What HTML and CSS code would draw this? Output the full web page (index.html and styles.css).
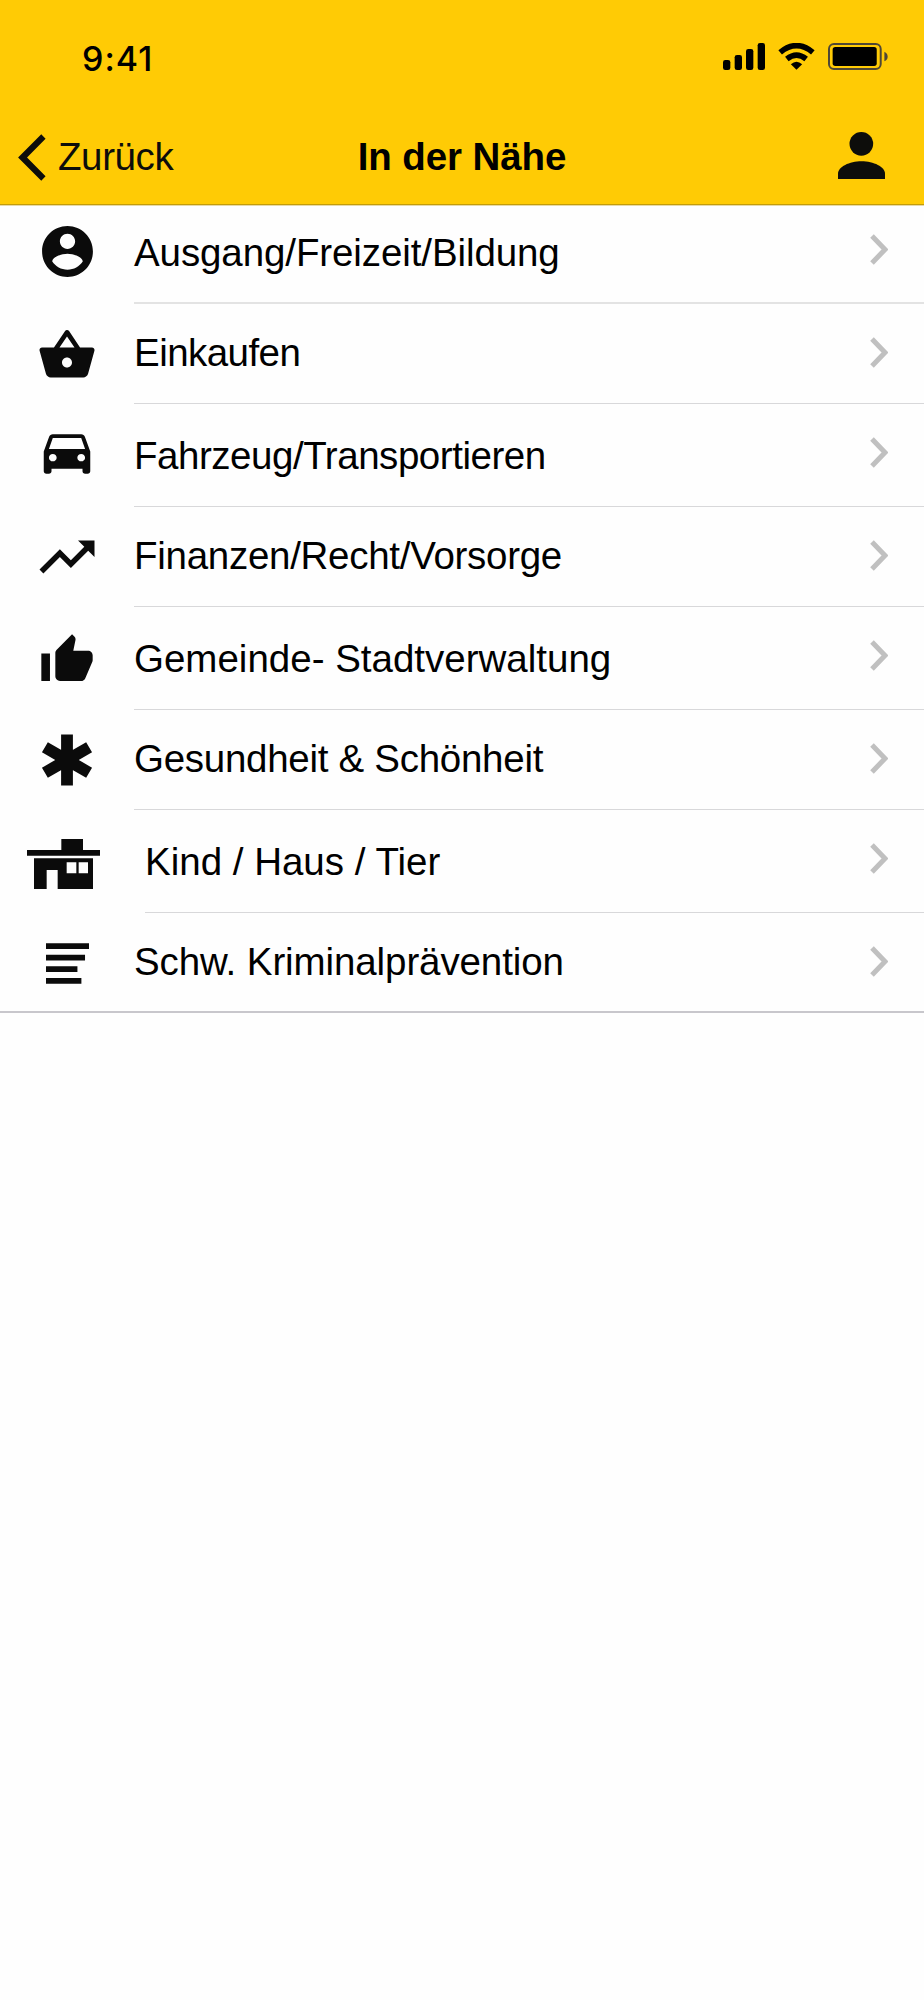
FILE: index.html
```html
<!DOCTYPE html>
<html lang="de">
<head>
    <meta charset="UTF-8">
    <meta name="viewport" content="width=device-width, initial-scale=1.0">
    <title>In der Nähe</title>
    <link rel="stylesheet" href="styles.css">
</head>
<body>
    <header class="header">
        <div class="status-bar">
            <span class="time">9:41</span>
            <div class="status-icons">
                <svg class="signal" viewBox="0 0 126 81">
                    <rect x="0" y="51" width="22" height="30" rx="7"/>
                    <rect x="35" y="36" width="22" height="45" rx="7"/>
                    <rect x="69" y="18" width="22" height="63" rx="7"/>
                    <rect x="104" y="0" width="22" height="81" rx="7"/>
                </svg>
                <svg class="wifi" viewBox="0 0 110 81">
                    <path d="M6 28Q55-12 104 28M26 48Q55 25 84 48" fill="none" stroke="#000" stroke-width="17"/>
                    <path d="M55 80L38 64Q55 49 72 64z"/>
                </svg>
                <svg class="battery" viewBox="0 0 181 81">
                    <rect x="3" y="3" width="156" height="75" rx="15" fill="none" stroke="#4f4736" stroke-width="6"/>
                    <rect x="14" y="12" width="133" height="57" rx="8"/>
                    <path d="M170 26q10 5 10 15t-10 14z" fill="#4f4736"/>
                </svg>
            </div>
        </div>
        <nav class="nav-bar">
            <a class="back" href="#">
                <svg class="back-icon" viewBox="0 0 84 142"><path d="M70 1L0 71l70 70 13-13-56-57 56-57z"/></svg>
                <span>Zurück</span>
            </a>
            <h1>In der Nähe</h1>
            <a class="profile" href="#">
                <svg viewBox="0 0 141 141"><circle cx="70" cy="35.500" r="35.500"/><path d="M0 141v-16C0 105 34 88 70.500 88S141 105 141 125v16z"/></svg>
            </a>
        </nav>
    </header>

    <ul class="category-list">
        <li class="category">
            <svg class="icon icon-account" viewBox="0 0 24 24"><path fill-rule="evenodd" d="M12 2C6.480 2 2 6.480 2 12s4.480 10 10 10 10-4.480 10-10S17.520 2 12 2zm0 3c1.660 0 3 1.340 3 3s-1.340 3-3 3-3-1.340-3-3 1.340-3 3-3zm0 14.200c-2.500 0-4.710-1.280-6-3.220.030-1.990 4-3.080 6-3.080 1.990 0 5.970 1.090 6 3.080-1.290 1.940-3.500 3.220-6 3.220z"/></svg>
            <div class="label"><span class="tight-1">Ausgang/Freizeit/Bildung</span></div>
            <svg class="chevron" viewBox="0 0 18 31"><path d="M2 2l13 13.500L2 29"/></svg>
        </li>
        <li class="category">
            <svg class="icon icon-basket" viewBox="0 0 24 24"><path d="M17.210 9l-4.380-6.560c-.190-.280-.510-.420-.830-.420-.320 0-.640.140-.830.430L6.790 9H2c-.550 0-1 .450-1 1 0 .090.010.180.040.270l2.540 9.270c.230.840 1 1.460 1.920 1.460h13c.920 0 1.690-.620 1.930-1.460l2.540-9.270L23 10c0-.550-.450-1-1-1h-4.790zM9 9l3-4.400L15 9H9zm3 8c-1.100 0-2-.900-2-2s.900-2 2-2 2 .900 2 2-.900 2-2 2z"/></svg>
            <div class="label"><span class="tight-4">Einkaufen</span></div>
            <svg class="chevron" viewBox="0 0 18 31"><path d="M2 2l13 13.500L2 29"/></svg>
        </li>
        <li class="category">
            <svg class="icon icon-car" viewBox="0 0 24 24" preserveAspectRatio="none"><path d="M18.920 6.010C18.720 5.420 18.160 5 17.500 5h-11c-.660 0-1.210.420-1.420 1.010L3 12v8c0 .550.450 1 1 1h1c.550 0 1-.450 1-1v-1h12v1c0 .550.450 1 1 1h1c.550 0 1-.450 1-1v-8l-2.080-5.990zM6.500 16c-.830 0-1.500-.670-1.500-1.500S5.670 13 6.500 13s1.500.670 1.500 1.500S7.330 16 6.500 16zm11 0c-.830 0-1.500-.670-1.500-1.500s.670-1.500 1.500-1.500 1.500.670 1.500 1.500-.670 1.500-1.500 1.500zM5 11l1.500-4.500h11L19 11H5z"/></svg>
            <div class="label"><span class="tight-3">Fahrzeug/Transportieren</span></div>
            <svg class="chevron" viewBox="0 0 18 31"><path d="M2 2l13 13.500L2 29"/></svg>
        </li>
        <li class="category">
            <svg class="icon icon-trend" viewBox="0 0 24 24"><path d="M16 6l2.290 2.290-4.880 4.880-4-4L2 16.590 3.410 18l6-6 4 4 6.300-6.290L22 12V6z"/></svg>
            <div class="label"><span class="tight-2">Finanzen/Recht/Vorsorge</span></div>
            <svg class="chevron" viewBox="0 0 18 31"><path d="M2 2l13 13.500L2 29"/></svg>
        </li>
        <li class="category">
            <svg class="icon icon-thumb" viewBox="0 0 24 24"><path d="M1 21h3.700V9.200H1v11.800zm22-11c0-1.100-.900-2-2-2h-6.310l.950-4.570.030-.320c0-.410-.170-.790-.440-1.060L14.170 1 7.590 7.590C7.220 7.950 7 8.450 7 9v10c0 1.100.900 2 2 2h9c.830 0 1.540-.500 1.840-1.220l3.020-7.050c.090-.230.140-.470.140-.730v-2z"/></svg>
            <div class="label"><span>Gemeinde- Stadtverwaltung</span></div>
            <svg class="chevron" viewBox="0 0 18 31"><path d="M2 2l13 13.500L2 29"/></svg>
        </li>
        <li class="category">
            <svg class="icon icon-star" viewBox="-26 -26 52 52">
                <path d="M0-25.500v51M-22.100-12.750l44.200 25.500M-22.100 12.750l44.200-25.500" stroke="#0b0b0b" stroke-width="11.800"/>
            </svg>
            <div class="label"><span class="tight-2">Gesundheit &amp; Schönheit</span></div>
            <svg class="chevron" viewBox="0 0 18 31"><path d="M2 2l13 13.500L2 29"/></svg>
        </li>
        <li class="category indent">
            <svg class="icon icon-house" viewBox="0 0 219 150"><path fill-rule="evenodd" d="M103 0h65v33h51v17H0V33h103zM21 58h177v92H92V93H59v57H21zM119 70v33h29V70zM155 70v33h28V70z"/></svg>
            <div class="label"><span>Kind / Haus / Tier</span></div>
            <svg class="chevron" viewBox="0 0 18 31"><path d="M2 2l13 13.500L2 29"/></svg>
        </li>
        <li class="category">
            <svg class="icon icon-lines" viewBox="0 0 130 123"><path d="M0 0h130v17.500H0zM0 35h118v17.500H0zM0 70h95v17.500H0zM0 105.500h107V123H0z"/></svg>
            <div class="label"><span class="tight-1">Schw. Kriminalprävention</span></div>
            <svg class="chevron" viewBox="0 0 18 31"><path d="M2 2l13 13.500L2 29"/></svg>
        </li>
    </ul>
</body>
</html>
```
FILE: styles.css
```css
* {
    margin: 0;
    padding: 0;
    box-sizing: border-box;
}

body {
    font-family: 'Liberation Sans', Arial, sans-serif;
    font-size: 38.5px;
    color: #000;
    background: #fefefe;
    min-height: 100vh;
}

svg {
    display: block;
    flex-shrink: 0;
}

a {
    color: #0d0d0b;
    text-decoration: none;
}

/* Header */
.header {
    height: 206px;
    background: #ffcb05;
    border-bottom: 1px solid #e6d9a8;
    box-shadow: inset 0 -1px 0 #c39c0a;
}

.status-bar {
    height: 110px;
    display: flex;
    justify-content: space-between;
    align-items: center;
    padding: 0 36px 0 82px;
}

.time {
    font-family: Inter, sans-serif;
    font-size: 34px;
    font-weight: 500;
    letter-spacing: 1px;
    padding-top: 7px;
}

.status-icons {
    display: flex;
    align-items: center;
    gap: 13px;
    padding-top: 2px;
}

.signal {
    width: 42px;
    height: 27px;
}

.wifi {
    width: 37px;
    height: 27px;
}

.battery {
    width: 60px;
    height: 27px;
}

.nav-bar {
    height: 94px;
    display: grid;
    grid-template-columns: 1fr auto 1fr;
    align-items: center;
    padding: 0 39px 0 18px;
}

.back {
    display: flex;
    align-items: center;
    gap: 12px;
    letter-spacing: -0.4px;
}

.back-icon {
    width: 28px;
    height: 47px;
}

.back svg,
.profile svg {
    fill: #0d0d0b;
}

h1 {
    font-size: 38.5px;
    font-weight: bold;
    letter-spacing: -0.1px;
    padding-left: 21px;
}

.profile {
    justify-self: end;
}

.profile svg {
    width: 47px;
    height: 47px;
    margin-top: -3px;
}

/* Category list */
.category-list {
    list-style: none;
    display: grid;
    grid-template-rows: 98px 100px 103px 100px 103px 100px 103px 100px;
    border-bottom: 2px solid #c8c7cc;
    height: 807px;
}

.category {
    display: grid;
    grid-template-columns: 134px 1fr;
    align-items: start;
}

.category > * {
    grid-row: 1;
}

.icon {
    grid-column: 1;
    justify-self: center;
    fill: #0b0b0b;
}

.label {
    grid-column: 2;
    align-self: stretch;
    display: flex;
    align-items: flex-end;
    line-height: 60px;
    padding-bottom: 20px;
    border-bottom: 1px solid #d8d8da;
    white-space: nowrap;
}

.category:first-child .label {
    border-bottom: 2px solid #e3e3e3;
    padding-bottom: 19px;
}

.category:last-child .label {
    border-bottom: none;
    padding-bottom: 21px;
}

.tight-1 {
    letter-spacing: -0.1px;
}

.tight-2 {
    letter-spacing: -0.28px;
}

.tight-3 {
    letter-spacing: -0.46px;
}

.tight-4 {
    letter-spacing: -0.55px;
}

.chevron {
    grid-column: 2;
    justify-self: end;
    width: 18px;
    height: 31px;
    margin: 33px 36px 0 0;
    fill: none;
    stroke: #c0c0c0;
    stroke-width: 5;
}

.category:first-child .chevron {
    margin-top: 28px;
}

.icon-account {
    width: 61px;
    height: 61px;
    margin-top: 15px;
}

.icon-basket {
    width: 60px;
    height: 60px;
    margin-top: 21px;
}

.icon-car {
    width: 62px;
    height: 59px;
    margin-top: 18px;
}

.icon-trend {
    width: 66px;
    height: 66px;
    margin-top: 17px;
}

.icon-thumb {
    width: 56px;
    height: 56px;
    margin-top: 25px;
}

.icon-star {
    width: 52px;
    height: 52px;
    margin-top: 24px;
}

.icon-house {
    width: 73px;
    height: 50px;
    margin-top: 29px;
}

.icon-lines {
    width: 43px;
    height: 41px;
    margin-top: 30px;
}

.indent {
    grid-template-columns: 145px 1fr;
}

.indent .icon {
    justify-self: start;
    margin-left: 27px;
}
```
